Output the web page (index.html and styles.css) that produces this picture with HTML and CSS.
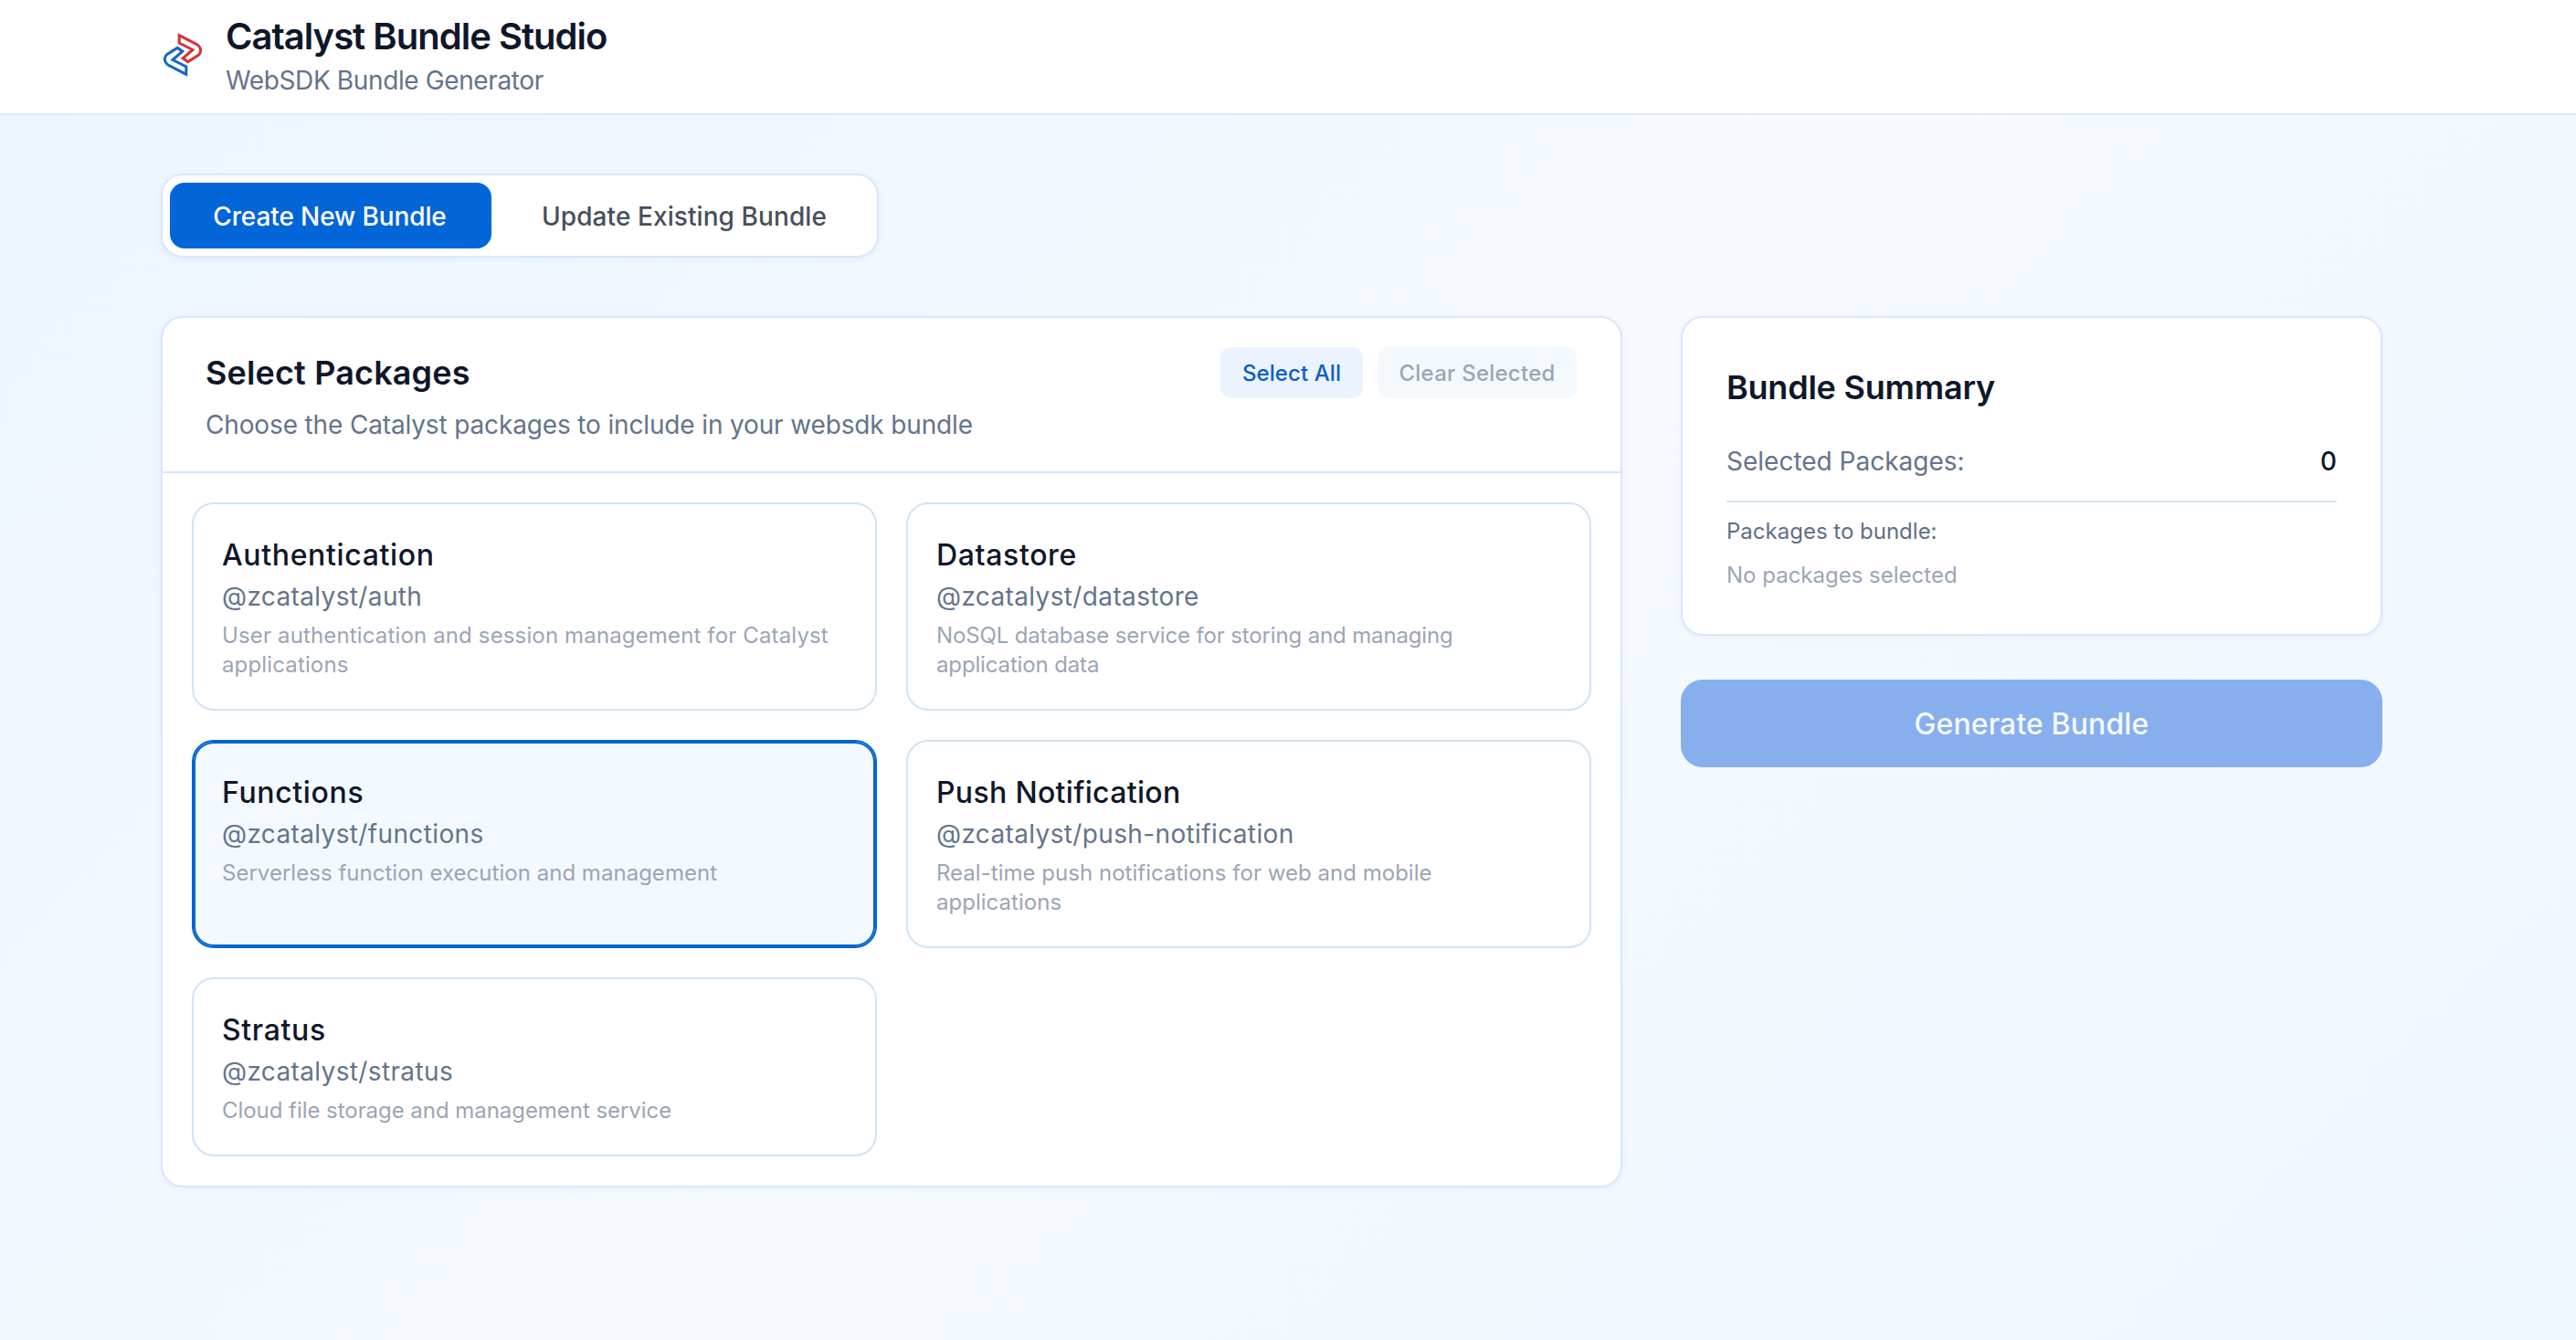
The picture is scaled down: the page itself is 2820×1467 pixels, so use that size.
FILE: index.html
```html
<!DOCTYPE html>
<html lang="en">
<head>
    <meta charset="UTF-8">
    <meta name="viewport" content="width=device-width, initial-scale=1.0">
    <title>Catalyst Bundle Studio</title>
    <link rel="stylesheet" href="styles.css">
</head>
<body>
    <header class="header">
        <div class="container brand">
            <svg class="logo" viewBox="16 16 48 48" fill="none" stroke-width="3">
                <path stroke="#d23339" d="M36.2 18.6 L55 28.3 Q59.6 31 59.6 35.5 Q59.6 38.5 57 40.6 L45.8 47.6 L40.2 43.8 L51 34.5 L36.2 27 Z"/>
                <path stroke="#1268c4" d="M43.8 61.4 L25 51.7 Q20.4 49 20.4 44.5 Q20.4 41.5 23 39.4 L34.2 32.4 L39.8 36.2 L29 45.5 L43.8 53 Z"/>
            </svg>
            <div>
                <h1 class="title">Catalyst Bundle Studio</h1>
                <p class="subtitle">WebSDK Bundle Generator</p>
            </div>
        </div>
    </header>

    <main class="container main">
        <div class="tabs">
            <button class="tab tab-create active">Create New Bundle</button>
            <button class="tab tab-update">Update Existing Bundle</button>
        </div>

        <div class="layout">
            <section class="panel">
                <div class="panel-header">
                    <div>
                        <h2 class="panel-title">Select Packages</h2>
                        <p class="panel-text">Choose the Catalyst packages to include in your websdk bundle</p>
                    </div>
                    <div class="actions">
                        <button class="action select-all">Select All</button>
                        <button class="action clear" disabled>Clear Selected</button>
                    </div>
                </div>
                <div class="packages">
                    <div class="package">
                        <h3 class="package-name">Authentication</h3>
                        <p class="package-id">@zcatalyst/auth</p>
                        <p class="package-desc auth">User authentication and session management for Catalyst applications</p>
                    </div>
                    <div class="package">
                        <h3 class="package-name">Datastore</h3>
                        <p class="package-id">@zcatalyst/datastore</p>
                        <p class="package-desc nosql">NoSQL database service for storing and managing application data</p>
                    </div>
                    <div class="package highlighted">
                        <h3 class="package-name">Functions</h3>
                        <p class="package-id">@zcatalyst/functions</p>
                        <p class="package-desc">Serverless function execution and management</p>
                    </div>
                    <div class="package">
                        <h3 class="package-name push">Push Notification</h3>
                        <p class="package-id">@zcatalyst/push-notification</p>
                        <p class="package-desc">Real-time push notifications for web and mobile applications</p>
                    </div>
                    <div class="package">
                        <h3 class="package-name">Stratus</h3>
                        <p class="package-id">@zcatalyst/stratus</p>
                        <p class="package-desc cloud">Cloud file storage and management service</p>
                    </div>
                </div>
            </section>

            <aside>
                <div class="panel summary">
                    <h2 class="panel-title">Bundle Summary</h2>
                    <div class="summary-row">
                        <span>Selected Packages:</span>
                        <span class="count">0</span>
                    </div>
                    <p class="list-label">Packages to bundle:</p>
                    <p class="empty">No packages selected</p>
                </div>
                <button class="generate" disabled>Generate Bundle</button>
            </aside>
        </div>
    </main>
</body>
</html>
```

FILE: styles.css
```css
* {
    box-sizing: border-box;
    margin: 0;
    padding: 0;
}

body {
    font-family: Inter, sans-serif;
    font-size: 28px;
    line-height: 40px;
    color: #0f172a;
    min-height: 100vh;
    background: linear-gradient(135deg, #ebf4ff 0%, #f6faff 50%, #eef6ff 100%);
}

button {
    border: none;
    font-family: inherit;
    font-weight: 500;
    cursor: pointer;
}

.container {
    width: 2432px;
    margin-left: 176px;
}

.header {
    background: #fff;
    border-bottom: 2px solid #dfeafa;
    padding: 16px 0;
}

.brand {
    display: flex;
    gap: 23px;
}

.logo {
    width: 48px;
    height: 48px;
    margin-top: 20px;
}

.title {
    font-size: 40px;
    line-height: 48px;
    font-weight: 600;
    letter-spacing: -0.0247em;
    margin-bottom: 4px;
}

.subtitle {
    color: #64748b;
    letter-spacing: -0.0135em;
}

.main {
    padding: 64px 0;
}

.tabs {
    display: inline-flex;
    vertical-align: top;
    gap: 8px;
    padding: 8px;
    background: #fff;
    border: 2px solid #dbe7f8;
    border-radius: 24px;
    box-shadow: 0 2px 6px rgba(0, 80, 200, 0.06);
}

.tab {
    height: 72px;
    padding-top: 2px;
    border-radius: 16px;
    font-size: 28px;
    color: #474f5c;
    background: transparent;
}

.tab-create {
    width: 352px;
    padding-right: 2px;
    letter-spacing: -0.004em;
}

.tab-update {
    width: 406px;
    letter-spacing: 0.003em;
}

.tab.active {
    background: #0265d8;
    color: #fff;
}

.layout {
    display: grid;
    grid-template-columns: 1600px 768px;
    gap: 64px;
    align-items: start;
    margin-top: 64px;
}

.panel {
    background: #fff;
    border: 2px solid #dae7f8;
    border-radius: 24px;
    box-shadow: 0 2px 6px rgba(0, 80, 200, 0.06);
}

.panel-header {
    display: flex;
    justify-content: space-between;
    align-items: flex-start;
    padding: 32px 48px 31px 47px;
    border-bottom: 2px solid #d7e5f6;
}

.panel-title {
    font-size: 36px;
    line-height: 56px;
    font-weight: 600;
    letter-spacing: 0.004em;
}

.panel-text {
    margin-top: 9px;
    color: #64748b;
    letter-spacing: -0.0052em;
}

.actions {
    display: flex;
    gap: 16px;
}

.action {
    height: 56px;
    padding-top: 1px;
    border-radius: 12px;
    font-size: 24px;
}

.select-all {
    width: 156px;
    background: #ebf3fe;
    color: #0a60c2;
    letter-spacing: 0.0036em;
}

.clear {
    width: 218px;
    background: #f4f9fe;
    color: #9da5b2;
    letter-spacing: 0.01em;
}

.packages {
    display: grid;
    grid-template-columns: 1fr 1fr;
    gap: 32px;
    padding: 32px;
}

.package {
    padding: 36px 40px 32px 31px;
    border: 2px solid #d3e3f4;
    border-radius: 24px;
}

.package.highlighted {
    background: #f3f9ff;
    border-color: #0265d0;
    box-shadow: inset 0 0 0 2px #0265d0;
}

.package-name {
    font-size: 32px;
    font-weight: 500;
    letter-spacing: 0.02em;
    margin-bottom: 5px;
}

.package-name.push {
    letter-spacing: 0.01em;
}

.package-id {
    color: #64748b;
    letter-spacing: 0.013em;
    margin-bottom: 7px;
}

.package-desc {
    font-size: 24px;
    line-height: 32px;
    color: #9ca5b6;
    letter-spacing: 0.001em;
}

.package-desc.auth {
    letter-spacing: 0.006em;
}

.package-desc.nosql {
    letter-spacing: -0.006em;
}

.package-desc.cloud {
    letter-spacing: -0.002em;
}

.summary {
    padding: 48px;
}

.summary .panel-title {
    letter-spacing: -0.006em;
}

.summary-row {
    display: flex;
    justify-content: space-between;
    margin-top: 33px;
    padding-bottom: 23px;
    border-bottom: 2px solid #d7e5f4;
    color: #64748b;
}

.count {
    color: #0f172a;
    font-weight: 500;
}

.list-label {
    margin-top: 16px;
    font-size: 24px;
    line-height: 32px;
    color: #5f6f87;
}

.empty {
    margin-top: 16px;
    font-size: 24px;
    line-height: 32px;
    color: #9ca5b6;
}

.generate {
    display: block;
    width: 100%;
    height: 96px;
    margin-top: 48px;
    border-radius: 24px;
    background: #88afed;
    color: #f5faff;
    font-size: 32px;
    letter-spacing: 0.0035em;
}
```
